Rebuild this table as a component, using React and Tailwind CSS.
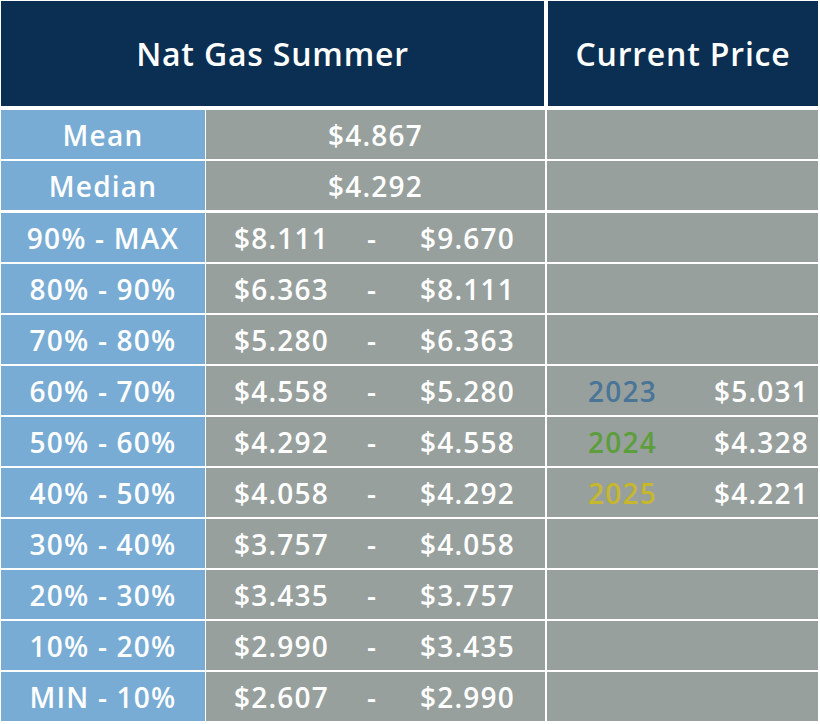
const ranges = [
  ["90% - MAX", "$8.111", "$9.670"],
  ["80% - 90%", "$6.363", "$8.111"],
  ["70% - 80%", "$5.280", "$6.363"],
  ["60% - 70%", "$4.558", "$5.280"],
  ["50% - 60%", "$4.292", "$4.558"],
  ["40% - 50%", "$4.058", "$4.292"],
  ["30% - 40%", "$3.757", "$4.058"],
  ["20% - 30%", "$3.435", "$3.757"],
  ["10% - 20%", "$2.990", "$3.435"],
  ["MIN - 10%", "$2.607", "$2.990"],
];

// current price rows sit next to these range rows
const current = {
  3: ["2023", "$5.031", "text-[#4a7597]"],
  4: ["2024", "$4.328", "text-[#5b9e3b]"],
  5: ["2025", "$4.221", "text-[#c6b72c]"],
};

function Row({ label, children, right, className = "" }) {
  return (
    <div className={`flex h-[49px] gap-[1px] ${className}`}>
      <div className="w-[204px] bg-[#79acd4] flex items-center justify-center">
        {label}
      </div>
      <div className="w-[339px] bg-[#98a09e] flex items-center">{children}</div>
      <div className="flex-1 ml-[1px] bg-[#98a09e] flex items-center">{right}</div>
    </div>
  );
}

export default function App() {
  return (
    <div className="w-[820px] h-[724px] bg-white pt-[1px] pl-[1px] text-white font-['Open_Sans',sans-serif] font-semibold text-[28px] tracking-[1.2px] leading-none">
      <div className="w-[817px]">
        {/* HEADER */}
        <div className="flex h-[105px] gap-[4px] text-[32px] tracking-[0.8px]">
          <div className="w-[543px] bg-[#0b2f52] flex items-center justify-center">
            Nat Gas Summer
          </div>
          <div className="flex-1 bg-[#0b2f52] flex items-center justify-center">
            Current Price
          </div>
        </div>

        <div className="flex flex-col gap-[2px] mt-[4px]">
          <Row label="Mean" right={null}>
            <span className="w-full text-center">$4.867</span>
          </Row>
          <Row label="Median" right={null}>
            <span className="w-full text-center">$4.292</span>
          </Row>

          {ranges.map(([label, lo, hi], i) => {
            const cur = current[i];
            return (
              <Row
                key={label}
                label={label}
                className={i === 0 ? "mt-[1px]" : ""}
                right={
                  cur && (
                    <div className="w-full flex items-center justify-between pl-[41px] pr-[9px]">
                      <span className={cur[2]}>{cur[0]}</span>
                      <span>{cur[1]}</span>
                    </div>
                  )
                }
              >
                <span className="pl-[28px] w-[161px]">{lo}</span>
                <span className="w-[53px]">-</span>
                <span>{hi}</span>
              </Row>
            );
          })}
        </div>
      </div>
    </div>
  );
}
